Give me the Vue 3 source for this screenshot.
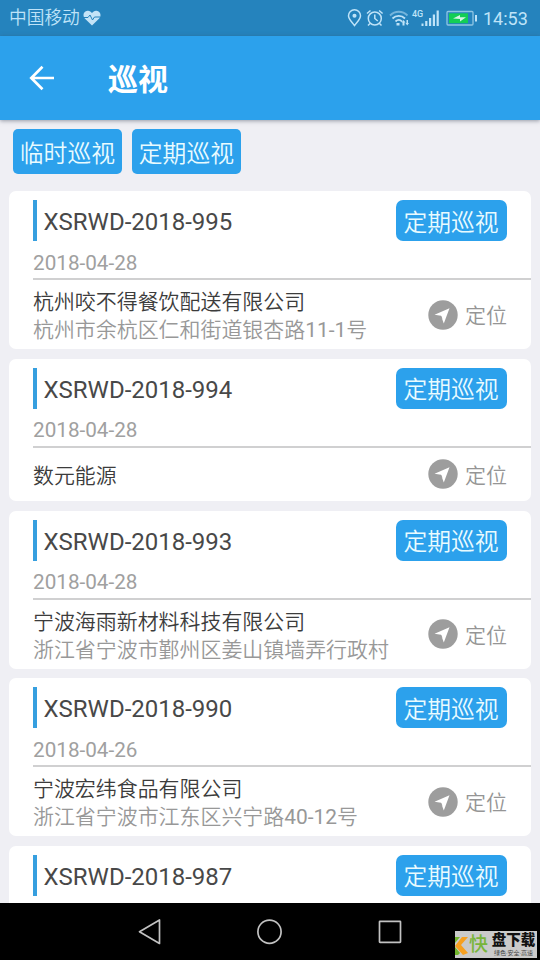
<script setup>
const records = [
  { code: 'XSRWD-2018-995', date: '2018-04-28', name: '杭州咬不得餐饮配送有限公司', address: '杭州市余杭区仁和街道银杏路11-1号' },
  { code: 'XSRWD-2018-994', date: '2018-04-28', name: '数元能源', address: '' },
  { code: 'XSRWD-2018-993', date: '2018-04-28', name: '宁波海雨新材料科技有限公司', address: '浙江省宁波市鄞州区姜山镇墙弄行政村' },
  { code: 'XSRWD-2018-990', date: '2018-04-26', name: '宁波宏纬食品有限公司', address: '浙江省宁波市江东区兴宁路40-12号' },
  { code: 'XSRWD-2018-987' },
]

// Splits an address so house numbers can take the regular weight.
const parts = (text) => text.split(/([\d-]+)/).filter(Boolean)
const isNumber = (text) => /^[\d-]+$/.test(text)
</script>

<template>
  <div class="screen">
    <header class="status">
      <span class="carrier">中国移动</span>
      <svg class="heart" width="18" height="16" viewBox="0 0 18 16">
        <path d="M9 15.5 1.8 8.4C-.8 5.6.6 1 4.5.7 6.500.5 8 1.500 9 3c1-1.500 2.500-2.500 4.500-2.300 3.900.3 5.300 4.900 2.700 7.700z" fill="#c3e3f7" />
        <path d="M1 7.500h4l2-2.500 2.500 5 2-3h5.500" fill="none" stroke="#2583bd" stroke-width="1" />
      </svg>
      <div class="indicators">
        <svg width="147" height="22" viewBox="0 0 147 22" fill="none" stroke="#bfe3f8" stroke-width="1.500">
          <g transform="translate(1 0)">
            <path d="M6.500 18.500C4 15 .5 12.200.5 8.700a6 6 0 0 1 12 0c0 3.500-3.500 6.300-6 9.800z" />
            <circle cx="6.500" cy="8.800" r="1.300" fill="#bfe3f8" />
          </g>
          <circle cx="27.800" cy="11.500" r="6.500" />
          <path d="M27.800 7.500v4l3 2.500M20 6.500l3.500-3M35.600 6.500l-3.500-3M23 16.500l-2 2M32.500 16.500l2 2" />
          <g stroke-width="1.800">
            <path d="M43 8.500c5-5 12.500-5 17.500 0" stroke="#75b5dc" />
            <path d="M45.500 11.500c3.500-3.500 9-3.500 12.500 0M48.500 14.500c2-2 4.500-2 6.500 0" />
          </g>
          <g fill="#bfe3f8" stroke="none">
            <path d="M49.500 16h3v2.500h-3zM54.500 15.500l2-2.500 2 2.500h-1v3h-2v-3zM58.500 16h1v-3h1.500v3h1l-1.800 2.500z" />
            <path d="M74.500 16.500h2v2.500h-2zM78.200 14h2.200v5h-2.200zM82 11h2.200v8h-2.200zM85.800 7.500h2.200v11.500h-2.200zM89.600 3.500h2.200v15.500h-2.200z" />
          </g>
          <rect x="100" y="4.500" width="26" height="13.500" rx="1" stroke="#8fc5e4" stroke-width="1.300" />
          <path d="M102 6.300h19v9.900h-19z" fill="#13ce55" stroke="none" />
          <path d="M106 11.500l7-3.500v2.200h6l-6 4.300v-2.400z" fill="#d4f5e5" stroke="none" />
          <path d="M129 8v6.500" stroke-width="2" />
          <text x="65" y="10" fill="#bfe3f8" stroke="none" class="network">4G</text>
        </svg>
        <span class="clock">14:53</span>
      </div>
    </header>

    <nav class="appbar">
      <svg width="26" height="26" viewBox="0 0 26 26" fill="none" stroke="#fff" stroke-width="2.700">
        <path d="M25 13H2.500M13.500 1.800 2.300 13l11.200 11.200" />
      </svg>
      <h1>巡视</h1>
    </nav>

    <main class="content">
      <div class="filters">
        <button class="tag filter">临时巡视</button>
        <button class="tag filter">定期巡视</button>
      </div>
      <section class="list">
        <article v-for="item in records" :key="item.code" class="card">
          <div class="head" :class="{ collapsed: !item.date }">
            <div class="title-row">
              <span class="code">{{ item.code }}</span>
              <span class="tag">定期巡视</span>
            </div>
            <div v-if="item.date" class="date">{{ item.date }}</div>
          </div>
          <div v-if="item.name" class="body" :class="{ short: !item.address }">
            <div class="company">
              <div class="name">{{ item.name }}</div>
              <div v-if="item.address" class="address"><span v-for="(part, i) in parts(item.address)" :key="i" :class="{ number: isNumber(part) }">{{ part }}</span></div>
            </div>
            <div class="locate">
              <svg width="30" height="30" viewBox="0 0 30 30">
                <circle cx="15" cy="15" r="14.700" fill="#9d9d9d" />
                <path d="M21.500 8.200 6.500 14.800l6.500 1 2.800 7.600z" fill="#fff" />
                <path d="m13 15.800-1 1.200 2.600 1.700z" fill="#9d9d9d" />
              </svg>
              <span>定位</span>
            </div>
          </div>
        </article>
      </section>
    </main>

    <footer class="navbar">
      <svg class="keys" width="264" height="26" viewBox="0 0 264 26" fill="none" stroke="#c2c2c2" stroke-width="1.700" stroke-linejoin="round">
        <path d="M21.500 1v23.500L1.500 12.800z" />
        <circle cx="131.500" cy="12.700" r="11.600" />
        <rect x="241.500" y="2.300" width="21" height="21" rx=".5" />
      </svg>
      <div class="watermark">
        <svg width="14" height="26" viewBox="0 0 14 26">
          <path d="M0 5h5L0 11z" fill="#71b52c" />
          <path d="M7 5h6L6 13l7 8-5 2-8-9z" fill="#f7a01f" />
          <path d="M0 15l5 6-2 2H0z" fill="#71b52c" />
        </svg>
        <span class="fast">快</span>
        <div class="words">
          <b>盘下载</b>
          <small>绿色·安全·高速</small>
        </div>
      </div>
    </footer>
  </div>
</template>

<style>
body { margin: 0; }
</style>

<style scoped>
.screen {
  width: 540px;
  height: 960px;
  display: flex;
  flex-direction: column;
  overflow: hidden;
  background: #efeff4;
  font-family: Roboto, "Noto Sans CJK SC", sans-serif;
}
.status {
  height: 36px;
  flex: none;
  box-sizing: border-box;
  padding: 0 12px 0 9px;
  display: flex;
  align-items: center;
  background: #2583bd;
  color: #bfe3f8;
}
.carrier { font-size: 17.700px; font-weight: 350; line-height: 24px; }
.heart { margin-left: 3px; }
.indicators { margin-left: auto; display: flex; align-items: center; }
.network { font-size: 9px; font-weight: 500; }
.clock { width: 45px; font-size: 18px; white-space: nowrap; margin-left: -11px; }
.appbar {
  height: 84px;
  flex: none;
  box-sizing: border-box;
  padding: 0 29px;
  display: flex;
  align-items: center;
  gap: 53px;
  background: #2ca1ec;
  box-shadow: 0 1px 4px rgba(60, 70, 90, .5);
  z-index: 1;
}
h1 { margin: 4px 0 0; font-size: 30px; line-height: 40px; color: #fff; font-weight: 700; }
.content { height: 783px; flex: none; overflow: hidden; }
.filters { display: flex; gap: 10px; padding: 9px 13.400px 17px; }
.tag {
  box-sizing: border-box;
  width: 111px;
  height: 41px;
  border: 0;
  border-radius: 7px;
  padding: 0 1px 1px 0;
  display: flex;
  align-items: center;
  justify-content: center;
  background: #2ca1ec;
  color: #e9fbff;
  font-family: inherit;
  font-size: 23.800px;
  font-weight: 350;
  white-space: nowrap;
}
.filter { width: 109px; height: 45px; border-radius: 5px; padding-bottom: 0; }
.list { display: flex; flex-direction: column; gap: 9.500px; padding: 0 9px; }
.card { background: #fff; border-radius: 7px; }
.head {
  height: 89px;
  box-sizing: border-box;
  margin-left: 24px;
  padding-top: 9px;
  border-bottom: 2px solid #d0d0d1;
}
.head.collapsed { border-bottom: 0; }
.title-row { display: flex; justify-content: space-between; padding-right: 24px; }
.code {
  border-left: 4.500px solid #369fdf;
  padding-left: 6.500px;
  height: 41px;
  line-height: 44px;
  font-size: 24px;
  color: #484848;
}
.date { font-size: 20.700px; line-height: 25px; margin-top: 9.500px; color: #a0a0a0; }
.body {
  height: 69px;
  box-sizing: border-box;
  padding: 0 24px;
  display: flex;
  align-items: center;
  justify-content: space-between;
}
.body.short { height: 53.500px; }
.company { font-size: 20.950px; font-weight: 350; white-space: nowrap; padding-top: 3px; }
.name { line-height: 28px; color: #3c3c3c; }
.address { line-height: 28px; color: #989898; }
.number { font-weight: 400; }
.locate { display: flex; align-items: center; gap: 7px; font-size: 21px; font-weight: 350; color: #959595; }
.locate span { padding-bottom: 1px; }
.navbar {
  height: 57px;
  flex: none;
  position: relative;
  display: flex;
  align-items: center;
  background: #000;
}
.keys { margin-left: 138px; }
.watermark {
  position: absolute;
  left: 455px;
  top: 28px;
  width: 82px;
  height: 27px;
  display: flex;
  align-items: center;
  background: #cacaca;
}
.watermark svg { flex: none; }
.fast { flex: none; font-size: 19px; line-height: 26px; width: 22px; color: #78b53b; font-weight: 500; }
.words { display: flex; flex-direction: column; align-items: center; width: 45px; color: #111; white-space: nowrap; }
.words b { font-size: 14.500px; line-height: 17px; font-weight: 900; }
.words small { font-size: 6px; line-height: 8px; color: #444; }
</style>
